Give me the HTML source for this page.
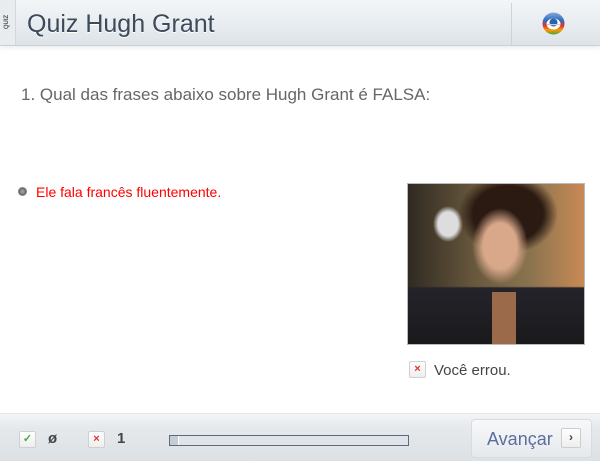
<!DOCTYPE html>
<html><head><meta charset="utf-8"><style>
body{margin:0;width:600px;height:460px;background:#fff;position:relative;overflow:hidden;font-family:"Liberation Sans",Arial,sans-serif}
.abs{position:absolute}
#hdr{left:0;top:0;width:600px;height:45px;background:linear-gradient(#f3f6f8,#e6ebef 60%,#dde3e8);border-bottom:1px solid #c9d0d6;box-shadow:0 2px 4px rgba(0,0,0,.08)}
#strip{left:0;top:0;width:15px;height:45px;background:#e9ecee;border-right:1px solid #d3d8dc}
#quiz{left:-8px;top:19px;width:30px;font-size:6px;color:#555;transform:rotate(-90deg);text-align:center;font-weight:bold}
#title{left:27px;top:10px;font-size:25px;color:#3e4a59;text-shadow:0 1px 0 #fff}
#div{left:511px;top:3px;width:1px;height:42px;background:#cdd3d8}
#foot{left:0;top:413px;width:600px;height:47px;background:linear-gradient(#f2f4f6,#e5e9ec 30%,#dce1e5);border-top:1px solid #e6e9ec}
.chk{width:15px;height:15px;background:linear-gradient(#fff,#eee);border:1px solid #cfcfcf;border-radius:2px;font-size:11px;text-align:center;line-height:15px;font-weight:bold}
</style></head><body>
<div id="hdr" class="abs"></div>
<div id="strip" class="abs"></div>
<div id="quiz" class="abs">QUIZ</div>
<div id="title" class="abs">Quiz Hugh Grant</div>
<div id="div" class="abs"></div>
<svg class="abs" style="left:541px;top:11px" width="25" height="25" viewBox="0 0 25 25">
<defs><linearGradient id="g" x1="0" y1="0" x2="0" y2="1"><stop offset="0" stop-color="#8aa8d8"/><stop offset=".35" stop-color="#2e6fc0"/><stop offset=".6" stop-color="#d33"/><stop offset=".8" stop-color="#f90"/><stop offset="1" stop-color="#3a3"/></linearGradient></defs>
<circle cx="12.5" cy="12.5" r="11" fill="url(#g)"/><ellipse cx="12.5" cy="13" rx="7" ry="5.5" fill="#fff"/><circle cx="12.5" cy="11.5" r="4" fill="#2a62b0"/><rect x="5.5" y="13" width="14" height="1.2" fill="#ccc"/></svg>
<div class="abs" style="left:21px;top:85px;font-size:17px;color:#666">1. Qual das frases abaixo sobre Hugh Grant é FALSA:</div>
<div class="abs" style="left:18px;top:187px;width:9px;height:9px;border-radius:50%;background:radial-gradient(#999 30%,#666 40%,#888 70%)"></div>
<div class="abs" style="left:36px;top:184px;font-size:14px;color:#f00">Ele fala francês fluentemente.</div>
<div class="abs" style="left:407px;top:183px;width:176px;height:160px;border:1px solid #bbb;background:
radial-gradient(ellipse 28px 38px at 92px 62px,#d9a88a 60%,transparent 100%),
radial-gradient(ellipse 50px 40px at 100px 30px,#2a1a12 70%,transparent 100%),
linear-gradient(to top,#1a1a1d 0,#23232a 35%,transparent 36%),
radial-gradient(ellipse 25px 30px at 40px 40px,#ddd 40%,transparent 60%),
linear-gradient(90deg,#2f2a22,#6b5a3e 40%,#8b7450 70%,#c98a55)"></div>
<div class="abs" style="left:492px;top:292px;width:24px;height:52px;background:#9a6a4a"></div>
<div class="abs chk" style="left:409px;top:361px;color:#d33">×</div>
<div class="abs" style="left:434px;top:362px;font-size:15px;color:#444">Você errou.</div>
<div id="foot" class="abs"></div>
<div class="abs chk" style="left:19px;top:431px;color:#4a4">✓</div>
<div class="abs" style="left:48px;top:430px;font-size:15px;font-weight:bold;color:#444">ø</div>
<div class="abs chk" style="left:88px;top:431px;color:#d33">×</div>
<div class="abs" style="left:117px;top:430px;font-size:15px;font-weight:bold;color:#444">1</div>
<div class="abs" style="left:169px;top:435px;width:238px;height:9px;border:1px solid #5a6a80;background:linear-gradient(90deg,#c5ccd4 0,#c5ccd4 8px,#fff 8px,#fff 9px,#e0e4e8 9px)"></div>
<div class="abs" style="left:471px;top:419px;width:119px;height:37px;border-radius:4px;background:linear-gradient(#f7f8f9,#e6e9ec);border:1px solid #d8dce0"></div>
<div class="abs" style="left:487px;top:429px;font-size:18px;color:#5a6fa0">Avançar</div>
<div class="abs" style="left:561px;top:428px;width:18px;height:18px;background:linear-gradient(#fff,#eee);border:1px solid #ccc;border-radius:2px;font-size:12px;text-align:center;line-height:17px;color:#445;font-weight:bold">›</div>
</body></html>
